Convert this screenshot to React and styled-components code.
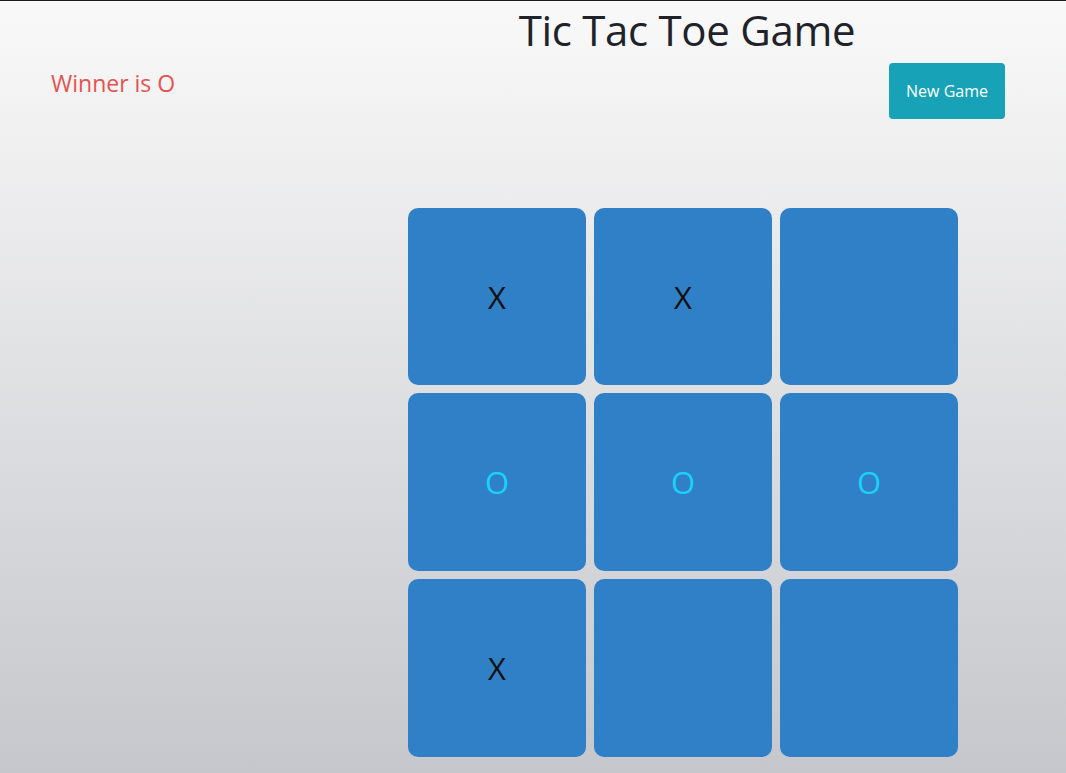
import React from 'react'
import styled, { createGlobalStyle } from 'styled-components'

const GlobalStyle = createGlobalStyle`
  html, body {
    margin: 0;
    padding: 0;
  }
  body {
    min-height: 100vh;
    border-top: 1px solid #1c1c1c;
    box-sizing: border-box;
    background: linear-gradient(to bottom, #f9f9f9 0%, #c6c7cc 100%);
    font-family: "Open Sans", "Noto Sans", sans-serif;
    color: #212529;
  }
`

const Page = styled.div`
  display: flex;
  flex-direction: column;
  height: 772px;
  overflow: hidden;
`

const Title = styled.h1`
  margin: 3px 0 0 408px;
  width: 558px;
  text-align: center;
  font-size: 42px;
  font-weight: 400;
  line-height: 52px;
  letter-spacing: -0.3px;
  color: #1f2329;
`

const Bar = styled.div`
  display: flex;
  justify-content: space-between;
  align-items: flex-start;
  padding: 7px 61px 0 51px;
`

const Winner = styled.div`
  margin-top: 5px;
  font-size: 23px;
  line-height: 30px;
  color: #e4534f;
`

const Button = styled.button`
  width: 116px;
  height: 56px;
  border: none;
  border-radius: 4px;
  background: #17a2b8;
  color: #fff;
  font-family: "Open Sans", "Noto Sans", sans-serif;
  font-size: 16px;
  cursor: pointer;
`

const Board = styled.div`
  display: grid;
  grid-template-columns: repeat(3, 178px);
  grid-template-rows: 177px 178px 178px;
  gap: 8px 8px;
  margin: 89px 0 0 408px;
`

const Cell = styled.div`
  display: flex;
  align-items: center;
  justify-content: center;
  border-radius: 10px;
  background: #3080c8;
  font-size: 31px;
  color: ${({ mark }) => (mark === 'O' ? '#19d3f7' : '#111')};
`

const cells = ['X', 'X', '', 'O', 'O', 'O', 'X', '', '']

export default function App() {
  return (
    <Page>
      <GlobalStyle />
      <Title>Tic Tac Toe Game</Title>
      <Bar>
        <Winner>Winner is O</Winner>
        <Button>New Game</Button>
      </Bar>
      <Board>
        {cells.map((mark, i) => (
          <Cell key={`cell-${i}`} mark={mark}>
            {mark}
          </Cell>
        ))}
      </Board>
    </Page>
  )
}
